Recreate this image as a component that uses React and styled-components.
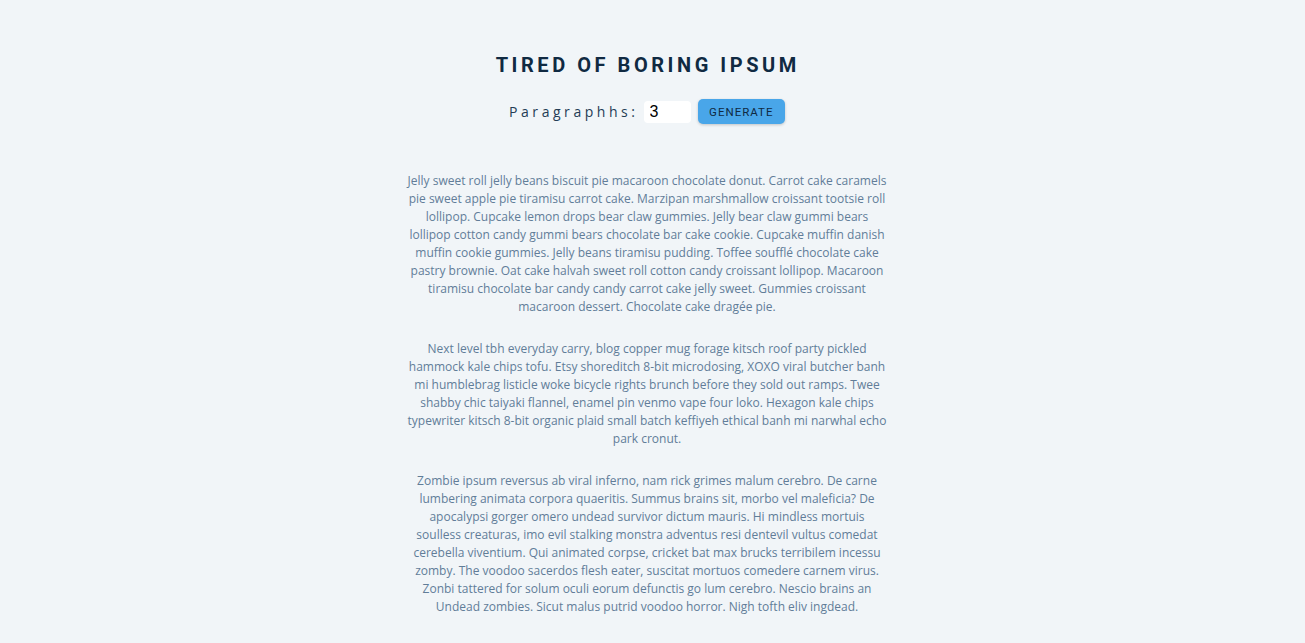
import React, { useState } from 'react';
import styled, { createGlobalStyle } from 'styled-components';

const GlobalStyle = createGlobalStyle`
    * {
        box-sizing: border-box;
    }
    body {
        margin: 0;
        padding-right: 11px;
        background: #f1f5f8;
        font-family: 'Open Sans', 'Liberation Sans', sans-serif;
    }
`;

const Section = styled.section`
    width: 480px;
    margin: 0 auto;
    padding-top: 53px;
    display: flex;
    flex-direction: column;
    align-items: center;
`;

const Title = styled.h3`
    margin: 0 0 21px;
    padding-left: 1.5px;
    font-family: Roboto, 'Liberation Sans', sans-serif;
    font-weight: 700;
    font-size: 20px;
    line-height: 1.25;
    letter-spacing: 3.55px;
    text-transform: uppercase;
    color: #102a42;
`;

const Form = styled.form`
    display: flex;
    align-items: center;
    justify-content: center;
    margin-bottom: 48px;
`;

const Label = styled.label`
    font-family: 'Open Sans', 'Liberation Sans', sans-serif;
    font-size: 14px;
    letter-spacing: 3.55px;
    color: #243c55;
    margin-right: 5px;
`;

const Input = styled.input`
    width: 47px;
    height: 22px;
    border: none;
    border-radius: 4px;
    background: #fff;
    padding: 0 6px;
    font-family: 'Liberation Sans', sans-serif;
    font-size: 16px;
    color: #000;
    outline: none;
    margin-right: 7px;
`;

const Button = styled.button`
    height: 25px;
    padding: 0 11.5px;
    border: none;
    border-radius: 5px;
    background: #49a6e9;
    color: #102a42;
    font-family: Roboto, 'Liberation Sans', sans-serif;
    font-size: 11.5px;
    letter-spacing: 1px;
    text-transform: uppercase;
    box-shadow: 0 1px 3px rgba(0, 0, 0, 0.2);
    cursor: pointer;
`;

const Article = styled.article`
    width: 100%;
`;

const Paragraph = styled.p`
    margin: 0 0 24px;
    font-size: 12px;
    line-height: 18px;
    text-align: center;
    color: #617d98;
`;

const texts = [
    'Jelly sweet roll jelly beans biscuit pie macaroon chocolate donut. Carrot cake caramels pie sweet apple pie tiramisu carrot cake. Marzipan marshmallow croissant tootsie roll lollipop. Cupcake lemon drops bear claw gummies. Jelly bear claw gummi bears lollipop cotton candy gummi bears chocolate bar cake cookie. Cupcake muffin danish muffin cookie gummies. Jelly beans tiramisu pudding. Toffee soufflé chocolate cake pastry brownie. Oat cake halvah sweet roll cotton candy croissant lollipop. Macaroon tiramisu chocolate bar candy candy carrot cake jelly sweet. Gummies croissant macaroon dessert. Chocolate cake dragée pie.',
    'Next level tbh everyday carry, blog copper mug forage kitsch roof party pickled hammock kale chips tofu. Etsy shoreditch 8-bit microdosing, XOXO viral butcher banh mi humblebrag listicle woke bicycle rights brunch before they sold out ramps. Twee shabby chic taiyaki flannel, enamel pin venmo vape four loko. Hexagon kale chips typewriter kitsch 8-bit organic plaid small batch keffiyeh ethical banh mi narwhal echo park cronut.',
    'Zombie ipsum reversus ab viral inferno, nam rick grimes malum cerebro. De carne lumbering animata corpora quaeritis. Summus brains sit, morbo vel maleficia? De apocalypsi gorger omero undead survivor dictum mauris. Hi mindless mortuis soulless creaturas, imo evil stalking monstra adventus resi dentevil vultus comedat cerebella viventium. Qui animated corpse, cricket bat max brucks terribilem incessu zomby. The voodoo sacerdos flesh eater, suscitat mortuos comedere carnem virus. Zonbi tattered for solum oculi eorum defunctis go lum cerebro. Nescio brains an Undead zombies. Sicut malus putrid voodoo horror. Nigh tofth eliv ingdead.',
];

export default function App() {
    const [count, setCount] = useState(3);

    return (
        <>
            <GlobalStyle />
            <Section>
                <Title>Tired of boring ipsum</Title>
                <Form onSubmit={(e) => e.preventDefault()}>
                    <Label htmlFor="amount">Paragraphhs:</Label>
                    <Input
                        type="text"
                        id="amount"
                        value={count}
                        onChange={(e) => setCount(e.target.value)}
                    />
                    <Button type="submit">Generate</Button>
                </Form>
                <Article>
                    {texts.map((text, idx) => (
                        <Paragraph key={idx}>{text}</Paragraph>
                    ))}
                </Article>
            </Section>
        </>
    );
}
